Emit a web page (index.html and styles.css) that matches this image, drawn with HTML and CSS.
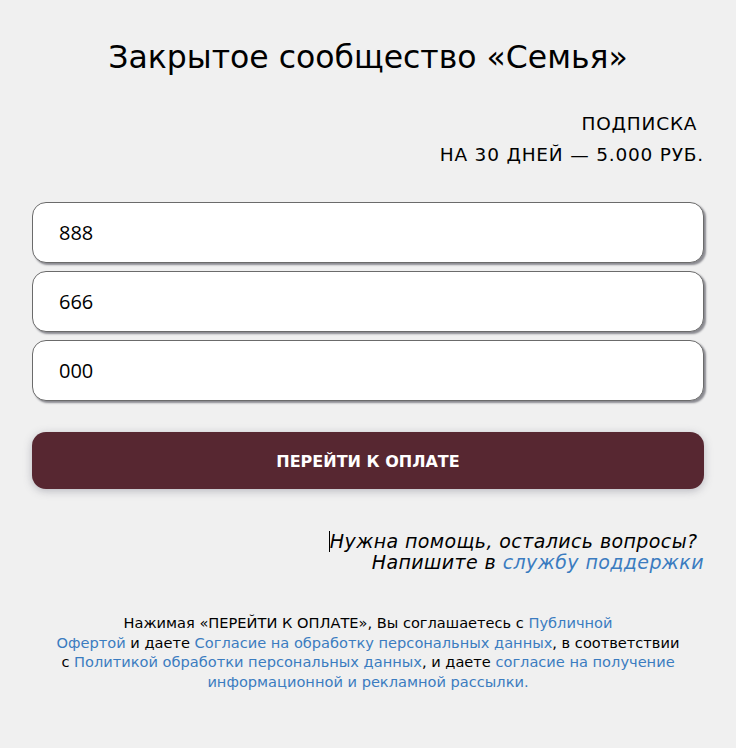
FILE: index.html
```html
<!DOCTYPE html>
<html lang="ru">
<head>
<meta charset="UTF-8">
<title>Закрытое сообщество «Семья»</title>
<link rel="stylesheet" href="styles.css">
</head>
<body>

<div class="page">
    <h1>Закрытое сообщество «Семья»</h1>

    <div class="price">
        ПОДПИСКА&nbsp;<br>
        НА 30 ДНЕЙ — 5.000 РУБ.
    </div>

    <form class="form">
        <input class="field" type="text" value="888">
        <input class="field" type="text" value="666">
        <input class="field" type="text" value="000">
        <button class="pay" type="button">ПЕРЕЙТИ К ОПЛАТЕ</button>
    </form>

    <div class="help">
        <span class="caret"></span>Нужна помощь, остались вопросы?&nbsp;<br>
        Напишите в <a href="#">службу поддержки</a>
    </div>

    <p class="terms">
        Нажимая «ПЕРЕЙТИ К ОПЛАТЕ», Вы соглашаетесь с <a href="#">Публичной</a><br>
        <a href="#">Офертой</a> и даете <a href="#">Согласие на обработку персональных данных</a>, в соответствии<br>
        с <a href="#">Политикой обработки персональных данных</a>, и даете <a href="#">согласие на получение</a><br>
        <a href="#">информационной и рекламной рассылки.</a>
    </p>
</div>

</body>
</html>
```

FILE: styles.css
```css
body {
    margin: 0;
    background: #f0f0f0;
    font-family: "DejaVu Sans", "Noto Sans", sans-serif;
    color: #000;
}

a {
    color: #3b7cc0;
    text-decoration: none;
}

.page {
    width: 672px;
    margin: 0 auto;
    padding: 36px 0 40px;
}

h1 {
    margin: 0;
    font-size: 31.5px;
    font-weight: normal;
    text-align: center;
    line-height: 42px;
}

/* Подписка */
.price {
    margin-top: 30px;
    text-align: right;
    font-size: 18.5px;
    letter-spacing: 0.8px;
    line-height: 31px;
}

.form {
    margin-top: 32px;
    display: flex;
    flex-direction: column;
    gap: 8px;
}

.field {
    box-sizing: border-box;
    height: 61px;
    padding: 0 26px;
    border: 1px solid #6b6b6b;
    border-radius: 14px;
    background: #fff;
    box-shadow: 2px 2px 2px #8a8a90;
    font-family: "Open Sans", "Noto Sans", sans-serif;
    font-size: 20px;
    color: #000;
    outline: none;
}

.pay {
    margin-top: 23px;
    height: 57px;
    border: none;
    border-radius: 14px;
    background: #572731;
    color: #fff;
    font-family: "DejaVu Sans", sans-serif;
    font-size: 16px;
    font-weight: bold;
    padding-top: 3px;
    box-shadow: 0 2px 8px rgba(80, 80, 100, 0.35);
    cursor: pointer;
}

/* Помощь */
.help {
    margin-top: 42px;
    text-align: right;
    font-size: 19px;
    font-style: italic;
    letter-spacing: 0.4px;
    line-height: 21px;
}

.caret {
    display: inline-block;
    width: 1px;
    height: 21px;
    background: #000;
    vertical-align: -4px;
}

.terms {
    margin: 40px 0 0;
    text-align: center;
    font-size: 14.6px;
    line-height: 19.5px;
    white-space: nowrap;
}
```
